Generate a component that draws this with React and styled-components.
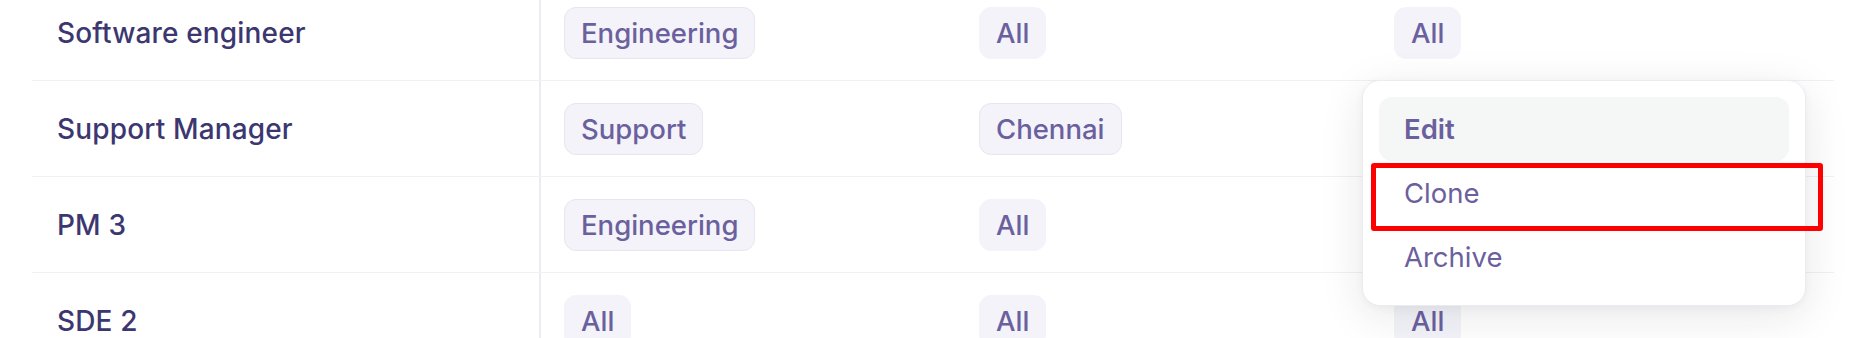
import React from "react";
import styled, { createGlobalStyle } from "styled-components";

const GlobalStyle = createGlobalStyle`
  html, body {
    margin: 0;
    padding: 0;
    background: #ffffff;
  }
  body {
    font-family: Inter, "Noto Sans", "Liberation Sans", sans-serif;
    -webkit-font-smoothing: antialiased;
  }
  * { box-sizing: border-box; }
`;

const Page = styled.div`
  position: relative;
  height: 338px;
  overflow: hidden;
  padding: 0 40px 0 32px;
`;

const Table = styled.div`
  display: flex;
  flex-direction: column;
  margin-top: -15px;
`;

const Row = styled.div`
  display: grid;
  grid-template-columns: 509px 415px 415px 1fr;
  border-bottom: 1px solid #eef1f5;
`;

const Cell = styled.div`
  display: flex;
  align-items: center;
  height: 95px;
  padding: 0 24px 0 ${(p) => (p.$first ? "25px" : "23px")};
  border-right: ${(p) => (p.$first ? "2px solid #ebeaf6" : "none")};
`;

const Name = styled.span`
  font-size: 28px;
  font-weight: 500;
  color: #3c3770;
  letter-spacing: 0.15px;
  white-space: nowrap;
`;

const Chip = styled.span`
  display: inline-flex;
  align-items: center;
  height: 52px;
  padding: 0 16px;
  border-radius: 12px;
  background: #f3f3f9;
  border: 1px solid ${(p) => (p.$outlined ? "#e7e6f1" : "#f3f3f9")};
  font-size: 27.5px;
  font-weight: 500;
  color: #6b609e;
  white-space: nowrap;
`;

const Menu = styled.div`
  position: absolute;
  left: 1362px;
  top: 80px;
  width: 444px;
  padding: 16px;
  background: #ffffff;
  border: 1px solid #ececf0;
  border-radius: 18px;
  box-shadow: 0 10px 44px rgba(30, 30, 50, 0.1), 0 2px 8px rgba(30, 30, 50, 0.04);
  display: flex;
  flex-direction: column;
`;

const MenuItem = styled.div`
  display: flex;
  align-items: center;
  height: 64px;
  padding: 0 25px;
  border-radius: 13px;
  background: ${(p) => (p.$active ? "#f5f6f6" : "transparent")};
  font-size: 27.5px;
  font-weight: ${(p) => (p.$active ? 600 : 400)};
  color: #6b609e;
`;

const Highlight = styled.div`
  position: absolute;
  left: 1371px;
  top: 163px;
  width: 452px;
  height: 68px;
  border: 5.5px solid #ff0000;
  border-radius: 3px;
  pointer-events: none;
`;

const rows = [
  { name: "Software engineer", dept: "Engineering", loc: "All", level: "All" },
  { name: "Support Manager", dept: "Support", loc: "Chennai", level: null },
  { name: "PM 3", dept: "Engineering", loc: "All", level: null },
  { name: "SDE 2", dept: "All", loc: "All", level: "All" },
];

const ChipFor = ({ value }) =>
  value ? <Chip $outlined={value !== "All"}>{value}</Chip> : null;

export default function App() {
  return (
    <>
      <GlobalStyle />
      <Page>
        <Table>
          {rows.map((r) => (
            <Row key={r.name}>
              <Cell $first>
                <Name>{r.name}</Name>
              </Cell>
              <Cell>
                <ChipFor value={r.dept} />
              </Cell>
              <Cell>
                <ChipFor value={r.loc} />
              </Cell>
              <Cell>
                <ChipFor value={r.level} />
              </Cell>
            </Row>
          ))}
        </Table>
        <Menu>
          <MenuItem $active>Edit</MenuItem>
          <MenuItem>Clone</MenuItem>
          <MenuItem>Archive</MenuItem>
        </Menu>
        <Highlight />
      </Page>
    </>
  );
}
